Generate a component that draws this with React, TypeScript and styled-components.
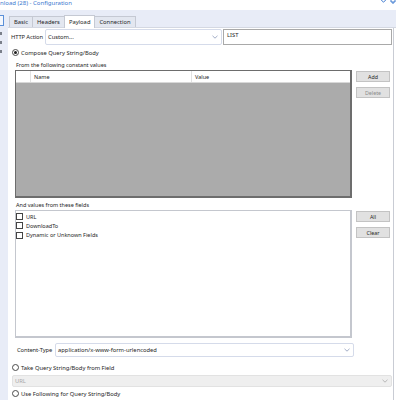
import React from 'react'
import styled, {createGlobalStyle} from 'styled-components'

const GlobalStyle = createGlobalStyle`
  html, body {
    margin: 0;
    padding: 0;
    background: #ffffff;
  }
  body {
    font-family: 'Noto Sans', 'Open Sans', Arial, sans-serif;
    font-size: 5.8px;
    color: #1e1e1e;
  }
`

const Window = styled.div`
  width: 396px;
  height: 400px;
  overflow: hidden;
  display: flex;
  flex-direction: column;
  background: #ffffff;
`

const TitleBar = styled.div`
  height: 10px;
  flex: none;
  display: flex;
  align-items: flex-start;
  justify-content: space-between;
  color: #3b78cf;
  font-size: 6px;
  line-height: 7px;
`

const TitleIcons = styled.div`
  display: flex;
  gap: 3px;
  margin-top: -2px;
  overflow: hidden;
  height: 6px;
`

const Body = styled.div`
  flex: 1;
  display: flex;
  min-height: 0;
`

const SideStrip = styled.div`
  width: 8px;
  flex: none;
  background: #e8ecf7;
  padding-top: 5px;
  display: flex;
  flex-direction: column;
  gap: 6px;
`

const SideSelected = styled.div`
  width: 3px;
  height: 9px;
  border: 1px solid #5a8fd8;
  border-left: none;
  background: #f4f7fd;
`

const SideTick = styled.div`
  width: 2px;
  height: 3px;
  background: #7a7f8a;
`

const Main = styled.div`
  flex: 1;
  display: flex;
  flex-direction: column;
  min-width: 0;
`

const TabStrip = styled.div`
  height: 17px;
  flex: none;
  background: #e8ecf7;
  display: flex;
  align-items: flex-end;
  padding-left: 1px;
  border-bottom: 1px solid #d4d8e2;
`

const Tab = styled.div<{$active?: boolean}>`
  height: ${({$active}) => ($active ? '12px' : '10px')};
  padding: 0 4px;
  display: flex;
  align-items: center;
  background: ${({$active}) => ($active ? '#ffffff' : '#e3e7f0')};
  border: 1px solid #c5c9d3;
  border-bottom: none;
  margin-bottom: ${({$active}) => ($active ? '-1px' : '0')};
  margin-right: -1px;
  position: relative;
`

const Panel = styled.div`
  flex: 1;
  display: flex;
  flex-direction: column;
  padding-left: 3px;
  padding-right: 1px;
  border-right: 1px solid #c9ccd4;
  margin-right: 2px;
  background: #ffffff;
`

const HttpRow = styled.div`
  margin-top: 1px;
  height: 16px;
  display: flex;
  align-items: center;
`

const FieldLabel = styled.div<{$width: number; $pad?: number}>`
  width: ${({$width}) => $width}px;
  padding-left: ${({$pad}) => $pad ?? 1}px;
  box-sizing: border-box;
  flex: none;
  white-space: nowrap;
  letter-spacing: -0.1px;
`

const Select = styled.div<{$width?: number; $height: number; $disabled?: boolean}>`
  width: ${({$width}) => ($width ? `${$width}px` : 'auto')};
  flex: ${({$width}) => ($width ? 'none' : '1')};
  height: ${({$height}) => $height}px;
  box-sizing: border-box;
  border: 1px solid ${({$disabled}) => ($disabled ? '#e2e2e2' : '#d5dbea')};
  border-radius: 2px;
  background: ${({$disabled}) => ($disabled ? '#efefef' : '#ffffff')};
  color: ${({$disabled}) => ($disabled ? '#a8a8a8' : '#1e1e1e')};
  display: flex;
  align-items: center;
  justify-content: space-between;
  padding: 0 3px 0 2px;
  white-space: nowrap;
`

const Chevron = ({color = '#98a4bf'}: {color?: string}) => (
  <svg width='6' height='4' viewBox='0 0 6 4'>
    <path d='M0.5 0.8 L3 3.2 L5.5 0.8' fill='none' stroke={color} strokeWidth='0.9' />
  </svg>
)

const TextInput = styled.div`
  flex: 1;
  height: 16px;
  box-sizing: border-box;
  border: 1.5px solid #a9a9a9;
  margin-left: 1px;
  padding: 1px 3px;
  display: flex;
  align-items: flex-start;
`

const RadioRow = styled.label<{$top: number}>`
  margin-top: ${({$top}) => $top}px;
  height: 9px;
  display: flex;
  align-items: center;
  gap: 2px;
  white-space: nowrap;
`

const Radio = styled.span<{$checked?: boolean}>`
  width: 7px;
  height: 7px;
  box-sizing: border-box;
  border-radius: 50%;
  border: 1px solid #4a4a4a;
  display: inline-flex;
  align-items: center;
  justify-content: center;
  margin-left: 1px;
  background: #ffffff;

  &::after {
    content: '';
    width: 3px;
    height: 3px;
    border-radius: 50%;
    background: ${({$checked}) => ($checked ? '#1e1e1e' : 'transparent')};
  }
`

const SectionLabel = styled.div<{$top: number}>`
  margin-top: ${({$top}) => $top}px;
  margin-left: 5px;
  height: 8px;
  display: flex;
  align-items: center;
  font-size: 5.5px;
`

const GridRow = styled.div<{$top: number}>`
  margin-top: ${({$top}) => $top}px;
  display: flex;
  align-items: flex-start;
  margin-left: 4px;
`

const Table = styled.div`
  width: 337px;
  height: 128px;
  box-sizing: border-box;
  background: #ababab;
  border: 1px solid #6d6d6d;
  border-right-width: 2px;
  border-bottom-width: 2px;
  display: flex;
  flex-direction: column;
`

const TableHeader = styled.div`
  height: 11px;
  flex: none;
  background: #ffffff;
  display: grid;
  grid-template-columns: 15px 161px 1fr;
  border-bottom: 1px solid #d8d8d8;
`

const HeaderCell = styled.div`
  display: flex;
  align-items: center;
  padding-left: 3px;
  border-right: 1px solid #e2e2e2;
  font-size: 5.5px;

  &:last-child {
    border-right: none;
  }
`

const ButtonColumn = styled.div`
  margin-left: 4px;
  display: flex;
  flex-direction: column;
  gap: 5px;
  padding-top: 1px;
`

const Button = styled.div<{$disabled?: boolean}>`
  width: 34px;
  height: 11px;
  box-sizing: border-box;
  background: #e1e1e1;
  border: 1px solid #c3c3c3;
  display: flex;
  align-items: center;
  justify-content: center;
  font-size: 5.3px;
  color: ${({$disabled}) => ($disabled ? '#8a8a8a' : '#1e1e1e')};
`

const FieldList = styled.div`
  width: 337px;
  height: 128px;
  box-sizing: border-box;
  border: 1px solid #c4c7ce;
  border-right-width: 2px;
  border-bottom-width: 2px;
  padding: 1px 0 0 0;
  display: flex;
  flex-direction: column;
`

const FieldItem = styled.div`
  height: 9.3px;
  display: flex;
  align-items: center;
  gap: 3px;
  font-size: 5.5px;
`

const Checkbox = styled.span`
  width: 7px;
  height: 7px;
  box-sizing: border-box;
  border: 1px solid #444444;
  background: #ffffff;
  flex: none;
`

const ContentRow = styled.div`
  margin-top: 5px;
  height: 14px;
  display: flex;
  align-items: center;
  width: 343px;
`

const UrlRow = styled.div`
  margin-top: 3px;
  margin-left: 1px;
  height: 12px;
  display: flex;
`

const BottomBox = styled.div`
  margin-top: 3px;
  margin-left: 1px;
  height: 12px;
  box-sizing: border-box;
  border: 1px solid #cfcfcf;
`

export default function App() {
  return (
    <>
      <GlobalStyle />
      <Window>
        <TitleBar>
          <span>nload (28) - Configuration</span>
          <TitleIcons>
            <svg width='7' height='6' viewBox='0 0 7 6'>
              <path d='M0.8 1.5 L3.5 4.2 L6.2 1.5' fill='none' stroke='#3b78cf' strokeWidth='1' />
            </svg>
            <svg width='6' height='7' viewBox='0 0 6 7'>
              <path d='M1 0 V4 H5 V0 M3 4 V7' fill='none' stroke='#3b78cf' strokeWidth='1' />
            </svg>
          </TitleIcons>
        </TitleBar>
        <Body>
          <SideStrip>
            <SideSelected />
            <SideTick />
            <SideTick />
            <SideTick />
          </SideStrip>
          <Main>
            <TabStrip>
              <Tab>Basic</Tab>
              <Tab>Headers</Tab>
              <Tab $active>Payload</Tab>
              <Tab>Connection</Tab>
            </TabStrip>
            <Panel>
              <HttpRow>
                <FieldLabel $width={34} $pad={0}>HTTP Action</FieldLabel>
                <Select $width={177} $height={16}>
                  <span>Custom...</span>
                  <Chevron />
                </Select>
                <TextInput>LIST</TextInput>
              </HttpRow>

              <RadioRow $top={3}>
                <Radio $checked />
                Compose Query String/Body
              </RadioRow>

              <SectionLabel $top={4}>From the following constant values</SectionLabel>
              <GridRow $top={1}>
                <Table>
                  <TableHeader>
                    <HeaderCell />
                    <HeaderCell>Name</HeaderCell>
                    <HeaderCell>Value</HeaderCell>
                  </TableHeader>
                </Table>
                <ButtonColumn>
                  <Button>Add</Button>
                  <Button $disabled>Delete</Button>
                </ButtonColumn>
              </GridRow>

              <SectionLabel $top={3}>And values from these fields</SectionLabel>
              <GridRow $top={1}>
                <FieldList>
                  {['URL', 'DownloadTo', 'Dynamic or Unknown Fields'].map((f) => (
                    <FieldItem key={f}>
                      <Checkbox />
                      {f}
                    </FieldItem>
                  ))}
                </FieldList>
                <ButtonColumn>
                  <Button>All</Button>
                  <Button>Clear</Button>
                </ButtonColumn>
              </GridRow>

              <ContentRow>
                <FieldLabel $width={44} $pad={6}>Content-Type</FieldLabel>
                <Select $height={14}>
                  <span>application/x-www-form-urlencoded</span>
                  <Chevron />
                </Select>
              </ContentRow>

              <RadioRow $top={6}>
                <Radio />
                Take Query String/Body from Field
              </RadioRow>
              <UrlRow>
                <Select $height={12} $disabled>
                  <span>URL</span>
                  <Chevron color='#b0b0b0' />
                </Select>
              </UrlRow>
              <RadioRow $top={2}>
                <Radio />
                Use Following for Query String/Body
              </RadioRow>
              <BottomBox />
            </Panel>
          </Main>
        </Body>
      </Window>
    </>
  )
}
